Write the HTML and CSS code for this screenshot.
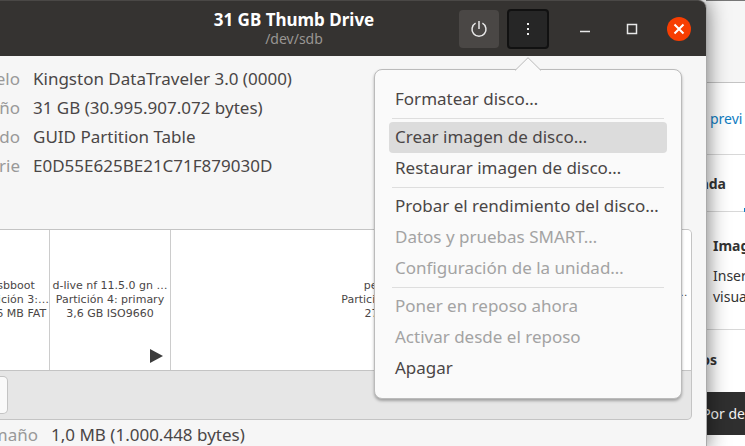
FILE: index.html
```html
<!DOCTYPE html>
<html lang="es">
<head>
    <meta charset="UTF-8">
    <title>31 GB Thumb Drive</title>
    <link rel="stylesheet" href="styles.css">
</head>
<body>
    <main class="disks">
        <header class="headerbar">
            <div class="heading">
                <h1 class="title">31 GB Thumb Drive</h1>
                <p class="subtitle">/dev/sdb</p>
            </div>
            <div class="controls">
                <button class="tool" type="button" aria-label="Apagar unidad">
                    <svg width="18" height="18" viewBox="0 0 18 18">
                        <path d="M5.6 3.2a7 7 0 1 0 6.800 0M9 1v8"/>
                    </svg>
                </button>
                <div class="menu-anchor">
                    <button class="tool tool-open" type="button" aria-label="Menú" aria-expanded="true">
                        <svg width="4" height="14" viewBox="0 0 4 14">
                            <path class="fill" d="M1 1h2v2H1zM1 6h2v2H1zM1 11h2v2H1z"/>
                        </svg>
                    </button>
                    <div class="popover">
                        <svg class="arrow" width="26" height="14" viewBox="0 0 26 14">
                            <path d="M0 13.500L13 .7l13 12.800"/>
                        </svg>
                        <button class="item" type="button">Formatear disco…</button>
                        <hr class="separator">
                        <button class="item item-active" type="button">Crear imagen de disco…</button>
                        <button class="item" type="button">Restaurar imagen de disco…</button>
                        <hr class="separator">
                        <button class="item" type="button">Probar el rendimiento del disco…</button>
                        <button class="item" type="button" disabled>Datos y pruebas SMART…</button>
                        <button class="item" type="button" disabled>Configuración de la unidad…</button>
                        <hr class="separator">
                        <button class="item" type="button" disabled>Poner en reposo ahora</button>
                        <button class="item" type="button" disabled>Activar desde el reposo</button>
                        <button class="item" type="button">Apagar</button>
                    </div>
                </div>
                <div class="window-buttons">
                    <button class="window-button" type="button" aria-label="Minimizar">
                        <svg width="24" height="24" viewBox="0 0 24 24">
                            <path d="M7 14.500h10"/>
                        </svg>
                    </button>
                    <button class="window-button" type="button" aria-label="Maximizar">
                        <svg width="24" height="24" viewBox="0 0 24 24">
                            <path d="M7.500 7.500h9v9h-9z"/>
                        </svg>
                    </button>
                    <button class="window-button close" type="button" aria-label="Cerrar">
                        <svg width="24" height="24" viewBox="0 0 24 24">
                            <path d="M7.500 7.500l9 9M16.500 7.500l-9 9"/>
                        </svg>
                    </button>
                </div>
            </div>
        </header>

        <dl class="details drive">
            <dt>Modelo</dt><dd>Kingston DataTraveler 3.0 (0000)</dd>
            <dt>Tamaño</dt><dd>31 GB (30.995.907.072 bytes)</dd>
            <dt>Particionado</dt><dd>GUID Partition Table</dd>
            <dt>Serie</dt><dd>E0D55E625BE21C71F879030D</dd>
        </dl>

        <section class="volumes">
            <div class="map">
                <div class="partition">
                    <span>usbboot</span>
                    <span>Partición 3:…</span>
                    <span>10,6 MB FAT</span>
                </div>
                <div class="partition">
                    <span>d-live nf 11.5.0 gn …</span>
                    <span>Partición 4: primary</span>
                    <span>3,6 GB ISO9660</span>
                    <svg class="mounted" width="13" height="14" viewBox="0 0 13 14">
                        <path d="M0 0l13 7-13 7z"/>
                    </svg>
                </div>
                <div class="partition">
                    <span>persistence</span>
                    <span>Partición 5: primary</span>
                    <span>27 GB Ext4</span>
                </div>
                <div class="partition">
                    <span>Espacio li…</span>
                    <span>1,0 MB</span>
                </div>
            </div>
            <div class="toolbar">
                <button class="toolbar-button" type="button" aria-label="Opciones"></button>
            </div>
        </section>

        <dl class="details volume">
            <dt>Tamaño</dt><dd>1,0 MB (1.000.448 bytes)</dd>
        </dl>
    </main>

    <aside class="editor">
        <div class="editor-top"></div>
        <div class="preview"><a class="link" href="#">previ</a></div>
        <div class="tabs"><b>nda</b></div>
        <div class="block">
            <b>Imag</b>
            <span>Inser</span>
            <span>visua</span>
        </div>
        <div class="group"><b>os</b></div>
        <div class="option"><span>Por de</span></div>
    </aside>
</body>
</html>
```

FILE: styles.css
```css
* {
    box-sizing: border-box;
}

body {
    margin: 0;
    display: grid;
    grid-template-columns: minmax(0, 1fr) 39px;
    height: 100vh;
    overflow: hidden;
    font: 17px/20px "Noto Sans", "Open Sans", sans-serif;
    color: #4a4646;
    background: #fff;
}

h1, p, dl, dd {
    margin: 0;
}

button {
    margin: 0;
    padding: 0;
    border: 0;
    font: inherit;
    color: inherit;
    background: none;
}

.disks {
    position: relative;
    z-index: 1;
    background: #f6f6f6;
    border-top-right-radius: 8px;
    box-shadow: 1px 0 0 #aaa, 0 0 22px rgba(0, 0, 0, .6);
}

/* the left part of the window lies off screen */
.headerbar {
    position: relative;
    z-index: 1;
    display: grid;
    grid-template-columns: 1fr auto 1fr;
    align-items: center;
    height: 56px;
    margin-left: -118px;
    background: #353331;
    border-top: 1px solid #4a4846;
    border-top-right-radius: 8px;
    color: #fff;
}

.heading {
    grid-column: 2;
    text-align: center;
}

.title {
    font-size: 17px;
    line-height: 20px;
}

.subtitle {
    font-size: 14px;
    line-height: 18px;
    color: #999693;
}

.controls {
    display: flex;
    justify-content: flex-end;
    align-items: center;
    gap: 8px;
    padding-right: 15px;
}

.controls svg {
    display: block;
    margin: auto;
    fill: none;
    stroke: #e8e8e8;
    stroke-width: 1.5;
}

.controls .fill {
    fill: #eee;
    stroke: none;
}

.tool {
    display: block;
    width: 40px;
    height: 38px;
    border-radius: 4px;
    background: #4a4745;
}

.tool-open {
    width: 42px;
    height: 40px;
    border: 2px solid #111;
    background: #262626;
}

.menu-anchor {
    position: relative;
}

.window-buttons {
    display: flex;
    gap: 23px;
    margin-left: 16px;
}

.window-button {
    width: 24px;
    height: 24px;
    border-radius: 12px;
}

.close {
    background: #f73e02;
}

.controls .close svg {
    stroke: #fff;
    stroke-width: 2;
}

.popover {
    position: absolute;
    top: 60px;
    right: -133px;
    width: 308px;
    padding: 14px;
    background: #fafafa;
    border: 1px solid #bbb;
    border-radius: 8px;
    box-shadow: 0 2px 3px rgba(0, 0, 0, .3);
    color: #4a4646;
}

.controls .arrow {
    position: absolute;
    top: -13px;
    left: 140px;
    fill: #fafafa;
    stroke: #bbb;
    stroke-width: 1;
}

.item {
    display: block;
    width: 100%;
    height: 31px;
    padding: 0 6px;
    border-radius: 4px;
    text-align: left;
    white-space: nowrap;
}

.item:disabled {
    color: #a3a3a3;
}

.item-active {
    background: #dcdcdc;
}

.separator {
    height: 1px;
    margin: 3px;
    border: 0;
    background: #dedede;
}

.details {
    display: grid;
    column-gap: 13px;
    grid-auto-rows: 29px;
    align-items: center;
    overflow: hidden;
    white-space: nowrap;
}

.details dt {
    display: flex;
    justify-content: flex-end;
    color: #999;
}

.drive {
    grid-template-columns: 20px 1fr;
    padding: 8px 0 49px;
}

.volume {
    grid-template-columns: 38px 1fr;
}

.volumes {
    margin-right: 14px;
    border: 1px solid #c4c4c4;
    border-left: 0;
    border-radius: 0 5px 5px 0;
    overflow: hidden;
    background: #e6e6e6;
}

/* the first partition starts off screen */
.map {
    display: grid;
    grid-template-columns: 74px 121px 1fr 70px;
    height: 141px;
    margin-left: -24px;
    border-bottom: 1px solid #c4c4c4;
    background: #fff;
    font: 11px/14px "DejaVu Sans", sans-serif;
}

.partition {
    position: relative;
    display: flex;
    flex-direction: column;
    justify-content: center;
    align-items: center;
    white-space: nowrap;
}

.partition:not(:last-child) {
    border-right: 1px solid #ccc;
}

.mounted {
    position: absolute;
    right: 7px;
    bottom: 7px;
    fill: #3c3c3c;
}

.toolbar {
    height: 48px;
    padding: 5px 0;
}

.toolbar-button {
    display: block;
    width: 8px;
    height: 38px;
    border: 1px solid #c4c4c4;
    border-left: 0;
    border-radius: 0 5px 5px 0;
    background: #fafafa;
}

.editor {
    display: flex;
    flex-direction: column;
    overflow: hidden;
    border-top: 1px solid #777;
    font-size: 14px;
    color: #333;
    white-space: nowrap;
}

.editor-top {
    height: 82px;
    background: #f6f6f6;
    border-bottom: 1px solid #c4c4c4;
}

.preview {
    height: 72px;
    padding: 26px 4px;
    border-bottom: 1px solid #d8d8d8;
}

.link {
    color: #0f7dc2;
    text-decoration: none;
}

.tabs {
    position: relative;
    display: flex;
    justify-content: flex-end;
    height: 57px;
    padding: 19px 19px 0 0;
    border-bottom: 1px solid #d8d8d8;
}

/* start of the selected tab's underline */
.tabs::after {
    content: "";
    position: absolute;
    right: 0;
    bottom: -1px;
    width: 1px;
    height: 4px;
    background: #0f7dc2;
}

.block {
    display: grid;
    height: 118px;
    padding: 24px 0 22px 7px;
    border-bottom: 1px solid #d8d8d8;
}

.block b {
    margin-bottom: 10px;
}

.group {
    display: flex;
    justify-content: flex-end;
    height: 62px;
    padding: 20px 28px 0 0;
}

.option {
    display: flex;
    justify-content: flex-end;
    align-items: center;
    height: 43px;
    background: #2f2f2f;
    color: #f4f4f4;
}
```
